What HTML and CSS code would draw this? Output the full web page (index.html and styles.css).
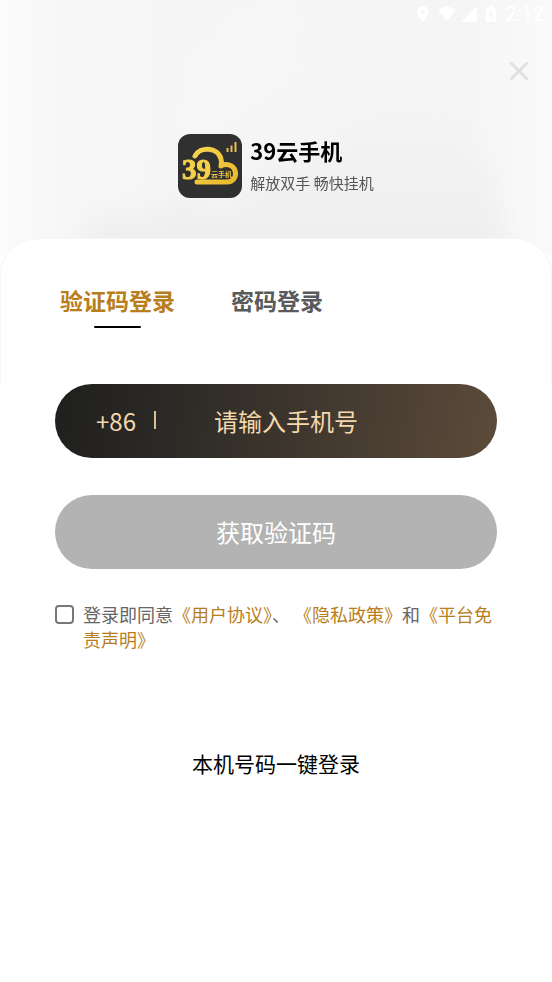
FILE: index.html
```html
<!DOCTYPE html>
<html lang="zh-CN">
<head>
<meta charset="utf-8">
<meta name="viewport" content="width=device-width, initial-scale=1">
<title>39云手机</title>
<link rel="stylesheet" href="styles.css">
</head>
<body>
<header class="hero">
  <svg class="hero-art" viewBox="0 0 552 255" preserveAspectRatio="none" aria-hidden="true">
    <defs>
      <linearGradient id="mist" x1="0" y1="0" x2="0" y2="1">
        <stop offset="0" stop-color="#f4f4f4"/>
        <stop offset="1" stop-color="#eeeeef"/>
      </linearGradient>
      <linearGradient id="edge" x1="0" y1="0" x2="1" y2="0">
        <stop offset="0" stop-color="#fbfbfb"/>
        <stop offset="0.15" stop-color="#f6f6f6"/>
        <stop offset="0.85" stop-color="#f5f5f5"/>
        <stop offset="1" stop-color="#fafafa"/>
      </linearGradient>
      <filter id="soft" x="-20%" y="-20%" width="140%" height="140%"><feGaussianBlur stdDeviation="9"/></filter>
    </defs>
    <rect width="552" height="255" fill="url(#edge)"/>
    <g filter="url(#soft)">
      <path fill="url(#mist)" d="M60 270 95 218 150 211 175 198 235 205 262 170 330 140 370 110 410 108 460 120 490 170 515 270Z"/>
      <path fill="#f8f8f8" opacity=".5" d="M165 205 185 60 235 0 320 0 300 90 175 150 172 200Z"/>
    </g>
  </svg>
  <div class="status">
    <svg class="icon-pin" width="12" height="18" viewBox="0 0 12 18" fill="#fff" aria-hidden="true"><path fill-rule="evenodd" d="M6 1a5.500 5.500 0 0 0-5.500 5.500C.5 10.500 6 17 6 17s5.500-6.500 5.500-10.500A5.500 5.500 0 0 0 6 1Zm0 3.500a2 2 0 1 1 0 4 2 2 0 0 1 0-4Z"/></svg>
    <svg width="18" height="16" viewBox="0 0 18 16" fill="#fff" aria-hidden="true"><path d="M0 4Q9-3 18 4L9 15Z"/></svg>
    <svg width="16" height="16" viewBox="0 0 16 16" fill="#fff" aria-hidden="true"><path d="M16 0V16H0Z"/></svg>
    <svg class="icon-battery" width="10" height="18" viewBox="0 0 10 18" fill="#fff" aria-hidden="true"><path fill-rule="evenodd" d="M3 1H7V3H9Q10 3 10 4V16Q10 17 9 17H1Q0 17 0 16V4Q0 3 1 3H3ZM5.500 5 2.500 11H4.500V15L7.500 9H5.500Z"/></svg>
    <time>2:12</time>
  </div>
  <div class="toolbar">
    <button class="close" type="button" aria-label="关闭">
      <svg width="20" height="20" viewBox="0 0 20 20" fill="none" stroke="#e0e0e0" stroke-width="3" aria-hidden="true"><path d="M1.500 1.500 18.500 18.500M18.500 1.500 1.500 18.500"/></svg>
    </button>
  </div>
  <div class="brand">
    <svg class="logo" width="64" height="64" viewBox="0 0 64 64" aria-hidden="true">
      <defs>
        <linearGradient id="gold" x1="0" y1="0" x2="1" y2="1">
          <stop offset="0" stop-color="#f8d34c"/>
          <stop offset="1" stop-color="#e8b92c"/>
        </linearGradient>
      </defs>
      <rect width="64" height="64" rx="12" fill="#303030"/>
      <path d="M17 22C22 12 40 13 43 25Q44 28 43 32M44 31C60 27 62 48 49 48H19" fill="none" stroke="url(#gold)" stroke-width="5" stroke-linecap="round"/>
      <path d="M49.500 18V14M53.500 18V11.500M57.500 18V8" stroke="#e6bf55" stroke-width="2"/>
      <text class="logo-number" x="4" y="45">39</text>
      <text class="logo-name" x="33" y="43">云手机</text>
    </svg>
    <div class="brand-text">
      <h1>39云手机</h1>
      <p>解放双手 畅快挂机</p>
    </div>
  </div>
</header>
<main>
  <div class="panel">
    <div class="tabs" role="tablist">
      <button class="tab active" type="button" role="tab" aria-selected="true">验证码登录</button>
      <button class="tab" type="button" role="tab" aria-selected="false">密码登录</button>
    </div>
  </div>
  <form class="login">
    <div class="phone">
      <label for="phone">+86</label>
      <span class="divider"></span>
      <input id="phone" type="tel" placeholder="请输入手机号">
    </div>
    <button class="submit" type="button">获取验证码</button>
    <div class="agreement">
      <input id="agree" type="checkbox">
      <label for="agree">登录即同意<a href="#">《用户协议》</a>、 <a href="#">《隐私政策》</a>和<a href="#">《平台免责声明》</a></label>
    </div>
    <button class="quick" type="button">本机号码一键登录</button>
  </form>
</main>
</body>
</html>
```

FILE: styles.css
```css
* {
  box-sizing: border-box;
}

body {
  margin: 0;
  background: #fff;
  color: #000;
  font-family: "Noto Sans CJK SC", sans-serif;
}

button,
input {
  margin: 0;
  padding: 0;
  border: 0;
  background: none;
  color: inherit;
  font: inherit;
}

button {
  cursor: pointer;
}

svg {
  display: block;
}

.hero {
  position: relative;
  z-index: 0;
  padding-bottom: 57px;
  background: #f6f6f6;
}

.hero-art {
  position: absolute;
  inset: 0;
  z-index: -1;
  width: 100%;
  height: 100%;
}

.status {
  display: flex;
  align-items: center;
  justify-content: flex-end;
  gap: 5px;
  height: 28px;
  padding-right: 8px;
  color: #fff;
  font: 20px/28px Roboto, sans-serif;
}

.icon-pin {
  margin-right: 4px;
}

.icon-battery {
  margin: 0 4px;
}

.toolbar {
  display: flex;
  justify-content: flex-end;
  padding: 28px 18px 48px;
}

.close {
  padding: 5px;
}

.brand {
  display: flex;
  justify-content: center;
  gap: 8px;
}

.logo-number {
  fill: #f7d04a;
  stroke: #f7d04a;
  font: bold 29px "Liberation Serif", serif;
}

.logo-name {
  fill: #e9c34a;
  font-size: 7px;
  font-weight: 700;
}

h1,
p {
  margin: 0;
}

h1 {
  font-size: 22px;
  font-weight: 700;
  line-height: 33px;
}

.brand p {
  color: #555;
  font-size: 15px;
  line-height: 32px;
}

.brand-text {
  height: 64px;
}

.panel {
  position: relative;
  z-index: 1;
  margin-top: -17px;
  padding: 44px 59px 56px;
  border: 1px solid #f5f5fc;
  border-bottom: 0;
  border-radius: 38px 38px 0 0;
  background: #fff;
}

.tabs {
  display: flex;
  gap: 56px;
}

.tab {
  display: flex;
  flex-direction: column;
  align-items: center;
  gap: 8px;
  color: #5a5a5a;
  font-size: 23px;
  font-weight: 700;
  line-height: 35px;
}

.tab.active {
  color: #b87e1c;
}

.tab.active::after {
  content: "";
  width: 47px;
  height: 2px;
  border-radius: 1px;
  background: #000;
}

.login {
  display: flex;
  flex-direction: column;
  padding: 0 55px;
}

.phone {
  display: flex;
  align-items: center;
  height: 74px;
  padding: 0 41px 2px;
  border-radius: 37px;
  background: linear-gradient(100deg, #1f1f1e, #2e2b27 30%, #5c4b3a);
  color: #f5d9ae;
  font-size: 24px;
}

.divider {
  width: 2px;
  height: 18px;
  margin: 0 58px 0 18px;
  background: #d9bd93;
}

.phone input {
  flex: 1;
  min-width: 0;
  height: 40px;
  outline: 0;
}

.phone input::placeholder {
  color: #f5d9ae;
  opacity: 1;
}

.submit {
  height: 74px;
  margin-top: 37px;
  padding-bottom: 2px;
  border-radius: 37px;
  background: #b3b3b3;
  color: #fff;
  font-size: 24px;
}

.agreement {
  display: flex;
  gap: 9px;
  margin-top: 33px;
  color: #666;
  font-size: 18px;
  line-height: 25px;
}

.agreement input {
  flex: none;
  width: 19px;
  height: 19px;
  margin-top: 3px;
  appearance: none;
  border: 2px solid #777;
  border-radius: 4px;
}

.agreement input:checked {
  background: #b87e1c;
}

.agreement a {
  color: #b87e1c;
  text-decoration: none;
}

.quick {
  align-self: center;
  margin-top: 95px;
  font-size: 21px;
  line-height: 32px;
}
```
